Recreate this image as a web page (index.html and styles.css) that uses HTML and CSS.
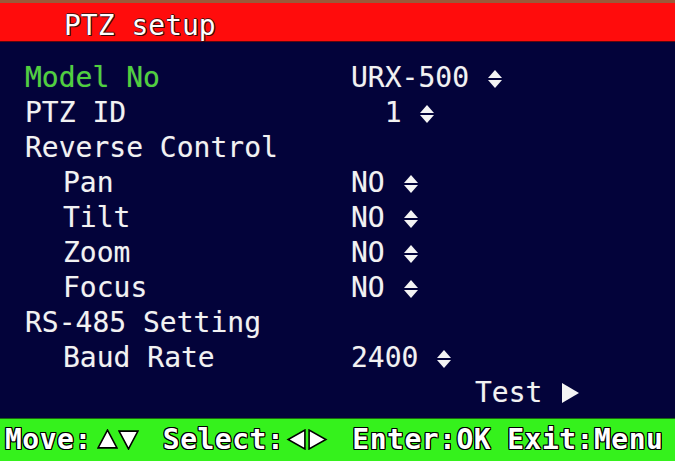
FILE: index.html
```html
<!DOCTYPE html>
<html>
<head>
<meta charset="utf-8">
<link rel="stylesheet" href="styles.css">
</head>
<body>
<div class="screen">
  <div class="topstrip"></div>
  <div class="header"><span class="title">PTZ setup</span></div>
  <div class="menu">
    <div class="row"><span class="label active">Model No</span><span class="value">URX-500 <svg class="updown" viewBox="0 0 14 18"><path d="M7 0 L14 8 L0 8 Z M0 10 L14 10 L7 18 Z"/></svg></span></div>
    <div class="row"><span class="label">PTZ ID</span><span class="value">&nbsp;&nbsp;1 <svg class="updown" viewBox="0 0 14 18"><path d="M7 0 L14 8 L0 8 Z M0 10 L14 10 L7 18 Z"/></svg></span></div>
    <div class="row"><span class="label">Reverse Control</span><span class="value"></span></div>
    <div class="row"><span class="label sub">Pan</span><span class="value">NO <svg class="updown" viewBox="0 0 14 18"><path d="M7 0 L14 8 L0 8 Z M0 10 L14 10 L7 18 Z"/></svg></span></div>
    <div class="row"><span class="label sub">Tilt</span><span class="value">NO <svg class="updown" viewBox="0 0 14 18"><path d="M7 0 L14 8 L0 8 Z M0 10 L14 10 L7 18 Z"/></svg></span></div>
    <div class="row"><span class="label sub">Zoom</span><span class="value">NO <svg class="updown" viewBox="0 0 14 18"><path d="M7 0 L14 8 L0 8 Z M0 10 L14 10 L7 18 Z"/></svg></span></div>
    <div class="row"><span class="label sub">Focus</span><span class="value">NO <svg class="updown" viewBox="0 0 14 18"><path d="M7 0 L14 8 L0 8 Z M0 10 L14 10 L7 18 Z"/></svg></span></div>
    <div class="row"><span class="label">RS-485 Setting</span><span class="value"></span></div>
    <div class="row"><span class="label sub">Baud Rate</span><span class="value">2400 <svg class="updown" viewBox="0 0 14 18"><path d="M7 0 L14 8 L0 8 Z M0 10 L14 10 L7 18 Z"/></svg></span></div>
    <div class="row"><span class="label"></span><span class="value test">Test <svg class="play" viewBox="0 0 17 20"><path d="M0 0 L17 10 L0 20 Z"/></svg></span></div>
  </div>
  <div class="footer">
    <span class="f-move">Move:</span>
    <span class="f-arrows"><svg class="farrow" viewBox="0 0 20 20"><path d="M10 1 L19 18 L1 18 Z"/></svg><svg class="farrow" viewBox="0 0 20 20"><path d="M1 2 L19 2 L10 19 Z"/></svg></span>
    <span class="f-select">Select:</span>
    <span class="f-arrows2"><svg class="farrow" viewBox="0 0 20 20"><path d="M18 1 L18 19 L2 10 Z"/></svg><svg class="farrow" viewBox="0 0 20 20"><path d="M2 1 L2 19 L18 10 Z"/></svg></span>
    <span class="f-enter">Enter:OK</span>
    <span class="f-exit">Exit:Menu</span>
  </div>
</div>
</body>
</html>
```

FILE: styles.css
```css
html, body {
  margin: 0;
  padding: 0;
  background: #03033a;
}

.screen {
  width: 675px;
  height: 461px;
  display: flex;
  flex-direction: column;
  overflow: hidden;
  font-family: "DejaVu Sans Mono", "Liberation Mono", monospace;
  font-size: 28px;
  color: #f2f2f2;
  background: #03033a;
}

.topstrip {
  height: 3px;
  background: #9a5a3a;
}

.header {
  height: 38px;
  background: #ff0c0c;
  border-bottom: 1px solid #5a0810;
  display: flex;
  align-items: flex-start;
  padding-left: 64px;
}

.title {
  line-height: 35px;
  margin-top: 5px;
  color: #ffffff;
  text-shadow: 1px 1px 0 #3a0a0a, -1px 0 0 #5a1010, 0 -1px 0 #5a1010, 1px 0 0 #3a0a0a;
}

.menu {
  flex: 1;
  padding-top: 18px;
  padding-left: 25px;
}

.row {
  display: grid;
  grid-template-columns: 326px auto;
  height: 35px;
  line-height: 35px;
  white-space: pre;
  text-shadow: 0 0 1px rgba(255,255,255,0.3);
}

.label.active {
  color: #4ed23c;
}

.label.sub {
  padding-left: 38px;
}

.updown {
  width: 14px;
  height: 18px;
  fill: #f4f4f4;
  vertical-align: -1px;
  margin-left: 2px;
}

.test {
  padding-left: 124px;
}

.play {
  width: 17px;
  height: 20px;
  fill: #f4f4f4;
  vertical-align: -1px;
  margin-left: 3px;
}

.footer {
  height: 43px;
  background: #35f21c;
  border-top: 1px solid #1a6a10;
  box-sizing: border-box;
  display: flex;
  align-items: flex-start;
  padding-top: 3px;
  padding-left: 5px;
  font-weight: bold;
  line-height: 35px;
  letter-spacing: 0.5px;
  color: #ffffff;
  white-space: pre;
  text-shadow: 1px 0 0 #000, -1px 0 0 #000, 0 1px 0 #000, 0 -1px 0 #000, 1px 1px 0 #000, -1px -1px 0 #000, 1px -1px 0 #000, -1px 1px 0 #000;
}

.footer > span {
  flex-shrink: 0;
}

.f-arrows,
.f-arrows2 {
  display: flex;
  align-items: center;
  height: 35px;
}

.f-arrows {
  margin-left: 5px;
}

.farrow {
  flex-shrink: 0;
  width: 21px;
  height: 21px;
  fill: #ffffff;
  stroke: #000000;
  stroke-width: 1.5;
}

.f-select {
  margin-left: 24px;
}

.f-arrows2 {
  margin-left: 2px;
}

.f-enter {
  margin-left: 24px;
}

.f-exit {
  margin-left: 16px;
}
```
